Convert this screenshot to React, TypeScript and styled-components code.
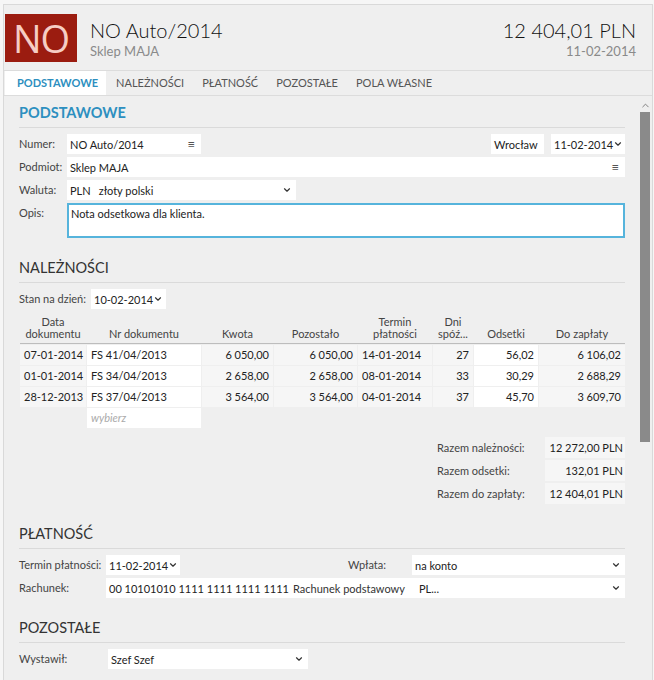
import React from "react";
import styled, { createGlobalStyle } from "styled-components";
import { ChevronDown, ChevronUp } from "lucide-react";

const GlobalStyle = createGlobalStyle`
  html, body {
    margin: 0;
    padding: 0;
    background: #f6f6f6;
    font-family: "Lato", "Noto Sans", sans-serif;
    font-size: 11px;
    color: #333;
  }
  * { box-sizing: border-box; }
`;

type Row = {
  date: string;
  nr: string;
  kwota: string;
  pozostalo: string;
  termin: string;
  dni: string;
  odsetki: string;
  doZaplaty: string;
};

const rows: Row[] = [
  { date: "07-01-2014", nr: "FS 41/04/2013", kwota: "6 050,00", pozostalo: "6 050,00", termin: "14-01-2014", dni: "27", odsetki: "56,02", doZaplaty: "6 106,02" },
  { date: "01-01-2014", nr: "FS 34/04/2013", kwota: "2 658,00", pozostalo: "2 658,00", termin: "08-01-2014", dni: "33", odsetki: "30,29", doZaplaty: "2 688,29" },
  { date: "28-12-2013", nr: "FS 37/04/2013", kwota: "3 564,00", pozostalo: "3 564,00", termin: "04-01-2014", dni: "37", odsetki: "45,70", doZaplaty: "3 609,70" },
];

const tabs = ["PODSTAWOWE", "NALEŻNOŚCI", "PŁATNOŚĆ", "POZOSTAŁE", "POLA WŁASNE"];

const App = () => {
  return (
    <>
      <GlobalStyle />
      <Frame>
        <Header>
          <Logo>NO</Logo>
          <TitleBlock>
            <Title>NO Auto/2014</Title>
            <SubTitle>Sklep MAJA</SubTitle>
          </TitleBlock>
          <AmountBlock>
            <Title>12 404,01 PLN</Title>
            <SubTitle>11-02-2014</SubTitle>
          </AmountBlock>
        </Header>

        <TabBar>
          {tabs.map((t, i) => (
            <Tab key={t} $active={i === 0}>{t}</Tab>
          ))}
        </TabBar>

        <Body>
          <Scroll>
            <SectionTitle $accent>PODSTAWOWE</SectionTitle>
            <FormRow>
              <Label>Numer:</Label>
              <Field $w={134}>
                NO Auto/2014
                <MenuIcon>≡</MenuIcon>
              </Field>
              <Spacer />
              <Field $w={53}>Wrocław</Field>
              <Field $w={74} style={{ marginLeft: 7 }}>
                11-02-2014
                <Chevron />
              </Field>
            </FormRow>
            <FormRow>
              <Label>Podmiot:</Label>
              <Field $grow>
                Sklep MAJA
                <MenuIcon>≡</MenuIcon>
              </Field>
            </FormRow>
            <FormRow>
              <Label>Waluta:</Label>
              <Field $w={229}>
                PLN<Gap />złoty polski
                <Chevron />
              </Field>
            </FormRow>
            <FormRow>
              <Label $top>Opis:</Label>
              <TextArea>Nota odsetkowa dla klienta.</TextArea>
            </FormRow>

            <SectionTitle>NALEŻNOŚCI</SectionTitle>
            <FormRow>
              <Label $w={72}>Stan na dzień:</Label>
              <Field $w={75}>
                10-02-2014
                <Chevron />
              </Field>
            </FormRow>

            <Table>
              <Th>Data<br />dokumentu</Th>
              <Th>Nr dokumentu</Th>
              <Th>Kwota</Th>
              <Th>Pozostało</Th>
              <Th>Termin<br />płatności</Th>
              <Th>Dni<br />spóź...</Th>
              <Th>Odsetki</Th>
              <Th>Do zapłaty</Th>
              <HeadLine />
              {rows.map((r) => (
                <React.Fragment key={r.nr}>
                  <Td>{r.date}</Td>
                  <Td $white>{r.nr}</Td>
                  <Td $right>{r.kwota}</Td>
                  <Td $right>{r.pozostalo}</Td>
                  <Td>{r.termin}</Td>
                  <Td $right>{r.dni}</Td>
                  <Td $right $white>{r.odsetki}</Td>
                  <Td $right>{r.doZaplaty}</Td>
                </React.Fragment>
              ))}
              <EmptyCell />
              <Td $white $placeholder>wybierz</Td>
            </Table>

            <Totals>
              <TotalLabel>Razem należności:</TotalLabel>
              <TotalValue>12 272,00 PLN</TotalValue>
              <TotalLabel>Razem odsetki:</TotalLabel>
              <TotalValue>132,01 PLN</TotalValue>
              <TotalLabel>Razem do zapłaty:</TotalLabel>
              <TotalValue>12 404,01 PLN</TotalValue>
            </Totals>

            <SectionTitle>PŁATNOŚĆ</SectionTitle>
            <FormRow>
              <Label $w={87}>Termin płatności:</Label>
              <Field $w={74}>
                11-02-2014
                <Chevron />
              </Field>
              <Spacer />
              <Label $w={60} $alignRight>Wpłata:</Label>
              <Field $w={213} style={{ marginLeft: 26 }}>
                na konto
                <Chevron />
              </Field>
            </FormRow>
            <FormRow>
              <Label $w={87}>Rachunek:</Label>
              <Field $grow>
                <AccountNo>00 10101010 1111 1111 1111 1111</AccountNo>
                <AccountKind>Rachunek podstawowy</AccountKind>
                PL...
                <Chevron />
              </Field>
            </FormRow>

            <SectionTitle>POZOSTAŁE</SectionTitle>
            <FormRow>
              <Label $w={89}>Wystawił:</Label>
              <Field $w={200}>
                Szef Szef
                <Chevron />
              </Field>
            </FormRow>
          </Scroll>
          <ScrollBar>
            <ScrollArrow>
              <ChevronUp size={11} strokeWidth={2} />
            </ScrollArrow>
            <Thumb />
          </ScrollBar>
        </Body>
      </Frame>
    </>
  );
};

const Chevron = () => (
  <ChevronIcon>
    <ChevronDown size={10} strokeWidth={2.8} />
  </ChevronIcon>
);

// ramka okna
const Frame = styled.div`
  margin: 4px 0 0 3px;
  width: 650px;
  height: 676px;
  border: 1px solid #d9d9d9;
  border-bottom: none;
  background: #efefef;
  display: flex;
  flex-direction: column;
  overflow: hidden;
`;

const Header = styled.div`
  height: 65px;
  display: flex;
  align-items: flex-start;
  padding: 9px 16px 0 1px;
`;

const Logo = styled.div`
  width: 72px;
  height: 48px;
  background: #9b1c10;
  color: #f6cdc4;
  font-size: 38px;
  line-height: 48px;
  text-align: center;
  font-family: "Open Sans", "Lato", sans-serif;
  letter-spacing: -1px;
`;

const TitleBlock = styled.div`
  margin-left: 13px;
  flex: 1;
`;

const AmountBlock = styled.div`
  text-align: right;
`;

const Title = styled.div`
  font-size: 20px;
  font-weight: 300;
  line-height: 26px;
  color: #111;
  margin-top: 3px;
`;

const SubTitle = styled.div`
  font-size: 13px;
  line-height: 17px;
  color: #8a8a8a;
`;

const TabBar = styled.div`
  height: 26px;
  border-top: 1px solid #dcdcdc;
  border-bottom: 1px solid #dcdcdc;
  display: flex;
  padding-left: 1px;
`;

const Tab = styled.div<{ $active?: boolean }>`
  padding: 0 8px 0 10px;
  line-height: 24px;
  font-size: 11px;
  color: ${(p) => (p.$active ? "#2d8fc0" : "#555")};
  font-weight: ${(p) => (p.$active ? 700 : 400)};
  background: ${(p) => (p.$active ? "#fff" : "transparent")};
  &:first-child {
    padding-left: 12px;
  }
`;

const Body = styled.div`
  flex: 1;
  display: flex;
  min-height: 0;
`;

const Scroll = styled.div`
  flex: 1;
  padding: 7px 14px 0 15px;
  overflow: hidden;
`;

const ScrollBar = styled.div`
  width: 12px;
  display: flex;
  flex-direction: column;
  align-items: center;
  margin-right: 1px;
`;

const ScrollArrow = styled.div`
  height: 14px;
  display: flex;
  align-items: center;
  color: #777;
  margin-top: 2px;
`;

const Thumb = styled.div`
  width: 10px;
  height: 330px;
  background: #8a8a8a;
`;

const SectionTitle = styled.div<{ $accent?: boolean }>`
  font-size: 14.5px;
  font-weight: ${(p) => (p.$accent ? 700 : 400)};
  color: ${(p) => (p.$accent ? "#2d8fc0" : "#333")};
  padding-bottom: 4px;
  border-bottom: 1px solid #dadada;
  margin-top: ${(p) => (p.$accent ? "0" : "20px")};
  margin-bottom: 6px;
  line-height: 20px;
`;

const FormRow = styled.div`
  display: flex;
  align-items: flex-start;
  margin-bottom: 3px;
`;

const Label = styled.div<{ $w?: number; $top?: boolean; $alignRight?: boolean }>`
  width: ${(p) => p.$w ?? 48}px;
  flex-shrink: 0;
  line-height: 20px;
  color: #444;
  text-align: ${(p) => (p.$alignRight ? "right" : "left")};
  white-space: nowrap;
`;

const Spacer = styled.div`
  flex: 1;
`;

const Field = styled.div<{ $w?: number; $grow?: boolean }>`
  ${(p) => (p.$grow ? "flex: 1;" : `width: ${p.$w}px;`)}
  flex-shrink: 0;
  height: 20px;
  background: #fff;
  display: flex;
  align-items: center;
  padding: 0 4px 0 3px;
  color: #222;
  white-space: nowrap;
`;

const Gap = styled.span`
  display: inline-block;
  width: 8px;
`;

const MenuIcon = styled.span`
  margin-left: auto;
  margin-right: 2px;
  font-size: 13px;
  color: #555;
`;

const ChevronIcon = styled.span`
  margin-left: auto;
  display: flex;
  color: #333;
`;

const TextArea = styled.div`
  flex: 1;
  height: 35px;
  background: #fff;
  border: 2px solid #56b4dc;
  padding: 2px 2px;
  color: #222;
`;

const Table = styled.div`
  display: grid;
  grid-template-columns: 66px 114px 71px 83px 74px 40px 64px 86px;
  column-gap: 1px;
  row-gap: 1px;
  margin: 6px 0 0 1px;
`;

const Th = styled.div`
  text-align: center;
  color: #444;
  line-height: 12px;
  height: 27px;
  display: flex;
  align-items: flex-end;
  justify-content: center;
  padding-bottom: 2px;
`;

const HeadLine = styled.div`
  grid-column: 1 / -1;
  height: 1px;
  background: #bdbdbd;
`;

const Td = styled.div<{ $white?: boolean; $right?: boolean; $placeholder?: boolean }>`
  height: 20px;
  line-height: 20px;
  padding: 0 4px;
  background: ${(p) => (p.$white ? "#fff" : "#f6f6f6")};
  text-align: ${(p) => (p.$right ? "right" : "left")};
  color: ${(p) => (p.$placeholder ? "#aaa" : "#222")};
  font-style: ${(p) => (p.$placeholder ? "italic" : "normal")};
  white-space: nowrap;
`;

const EmptyCell = styled.div``;

const Totals = styled.div`
  display: grid;
  grid-template-columns: 108px 80px;
  row-gap: 2px;
  justify-content: end;
  margin-top: 9px;
`;

const TotalLabel = styled.div`
  line-height: 21px;
  color: #444;
`;

const TotalValue = styled.div`
  line-height: 21px;
  background: #f6f6f6;
  text-align: right;
  padding-right: 2px;
  color: #222;
  white-space: nowrap;
`;

const AccountNo = styled.span`
  width: 184px;
`;

const AccountKind = styled.span`
  width: 126px;
  color: #333;
`;

export default App;
